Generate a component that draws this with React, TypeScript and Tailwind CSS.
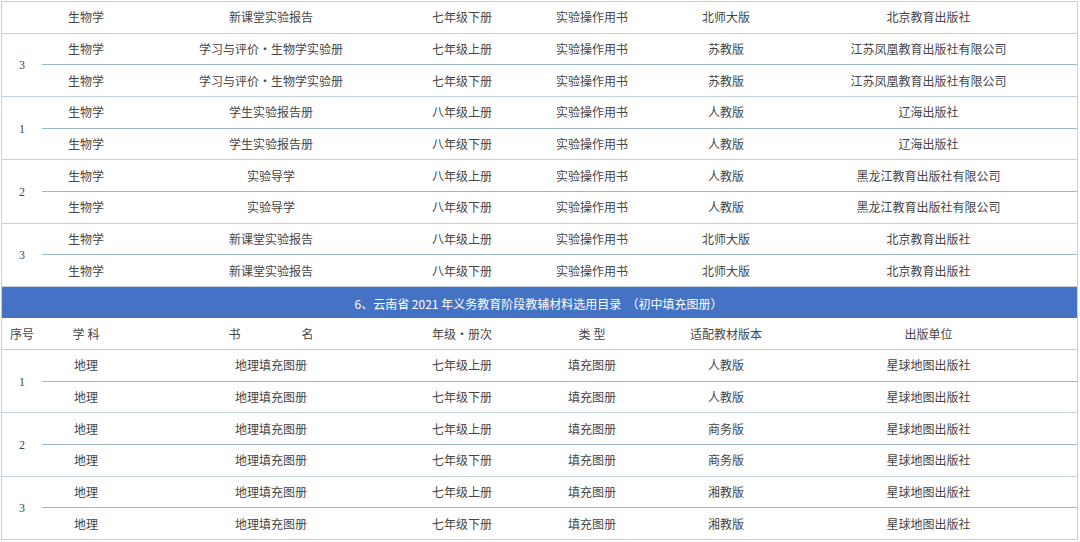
import React from "react";

type Row = [string, string, string, string, string, string];

const topRows: { seq: string; rows: Row[] }[] = [
  { seq: "", rows: [["生物学", "新课堂实验报告", "七年级下册", "实验操作用书", "北师大版", "北京教育出版社"]] },
  {
    seq: "3",
    rows: [
      ["生物学", "学习与评价・生物学实验册", "七年级上册", "实验操作用书", "苏教版", "江苏凤凰教育出版社有限公司"],
      ["生物学", "学习与评价・生物学实验册", "七年级下册", "实验操作用书", "苏教版", "江苏凤凰教育出版社有限公司"],
    ],
  },
  {
    seq: "1",
    rows: [
      ["生物学", "学生实验报告册", "八年级上册", "实验操作用书", "人教版", "辽海出版社"],
      ["生物学", "学生实验报告册", "八年级下册", "实验操作用书", "人教版", "辽海出版社"],
    ],
  },
  {
    seq: "2",
    rows: [
      ["生物学", "实验导学", "八年级上册", "实验操作用书", "人教版", "黑龙江教育出版社有限公司"],
      ["生物学", "实验导学", "八年级下册", "实验操作用书", "人教版", "黑龙江教育出版社有限公司"],
    ],
  },
  {
    seq: "3",
    rows: [
      ["生物学", "新课堂实验报告", "八年级上册", "实验操作用书", "北师大版", "北京教育出版社"],
      ["生物学", "新课堂实验报告", "八年级下册", "实验操作用书", "北师大版", "北京教育出版社"],
    ],
  },
];

const bottomRows: { seq: string; rows: Row[] }[] = [
  {
    seq: "1",
    rows: [
      ["地理", "地理填充图册", "七年级上册", "填充图册", "人教版", "星球地图出版社"],
      ["地理", "地理填充图册", "七年级下册", "填充图册", "人教版", "星球地图出版社"],
    ],
  },
  {
    seq: "2",
    rows: [
      ["地理", "地理填充图册", "七年级上册", "填充图册", "商务版", "星球地图出版社"],
      ["地理", "地理填充图册", "七年级下册", "填充图册", "商务版", "星球地图出版社"],
    ],
  },
  {
    seq: "3",
    rows: [
      ["地理", "地理填充图册", "七年级上册", "填充图册", "湘教版", "星球地图出版社"],
      ["地理", "地理填充图册", "七年级下册", "填充图册", "湘教版", "星球地图出版社"],
    ],
  },
];

function Cells({ r }: { r: Row }) {
  return (
    <>
      <div className="w-[88px] flex items-center justify-center">{r[0]}</div>
      <div className="w-[282px] flex items-center justify-center">{r[1]}</div>
      <div className="w-[100px] flex items-center justify-center">{r[2]}</div>
      <div className="w-[160px] flex items-center justify-center">{r[3]}</div>
      <div className="w-[108px] flex items-center justify-center">{r[4]}</div>
      <div className="flex-1 flex items-center justify-center">{r[5]}</div>
    </>
  );
}

function Group({ seq, rows }: { seq: string; rows: Row[] }) {
  const h = rows.length === 2 ? "h-[63.3px]" : "h-[31.65px]";
  return (
    <div className={`flex ${h} border-b border-[#c3d2e1]`}>
      <div className="w-[40px] flex items-center justify-center pt-[1px]">{seq}</div>
      <div className="flex-1 flex flex-col">
        {rows.map((r, i) => (
          <div
            key={i}
            className={
              i < rows.length - 1
                ? "flex h-[31.65px] shrink-0 border-b border-[#9db8c6] pt-[2px]"
                : "flex flex-1 pt-[2px]"
            }
          >
            <Cells r={r} />
          </div>
        ))}
      </div>
    </div>
  );
}

export default function App() {
  return (
    <div className="w-[1080px] h-[542px] bg-white overflow-hidden pt-[1px] pl-[1px] font-['Liberation_Serif','Noto_Sans_CJK_SC',serif] text-[12px] text-[#454545]">
      <div className="w-[1077px] border-t border-l border-r border-[#c3d2e1]">
        {topRows.map((g, i) => (
          <Group key={"t" + i} seq={g.seq} rows={g.rows} />
        ))}
        <div className="h-[31.65px] bg-[#4472c4] text-white flex items-center justify-center font-['Noto_Sans_CJK_SC',sans-serif] pt-[2px] pr-[2px]">
          6、云南省 2021 年义务教育阶段教辅材料选用目录&nbsp;&nbsp;（初中填充图册）
        </div>
        <div className="flex h-[31.65px] border-b border-[#c3d2e1] pt-[2px]">
          <div className="w-[40px] flex items-center justify-center">序号</div>
          <div className="w-[88px] flex items-center justify-center">学 科</div>
          <div className="w-[282px] flex items-center justify-center gap-[61px]">
            <span>书</span>
            <span>名</span>
          </div>
          <div className="w-[100px] flex items-center justify-center">年级・册次</div>
          <div className="w-[160px] flex items-center justify-center">类 型</div>
          <div className="w-[108px] flex items-center justify-center">适配教材版本</div>
          <div className="flex-1 flex items-center justify-center">出版单位</div>
        </div>
        {bottomRows.map((g, i) => (
          <Group key={"b" + i} seq={g.seq} rows={g.rows} />
        ))}
      </div>
    </div>
  );
}
